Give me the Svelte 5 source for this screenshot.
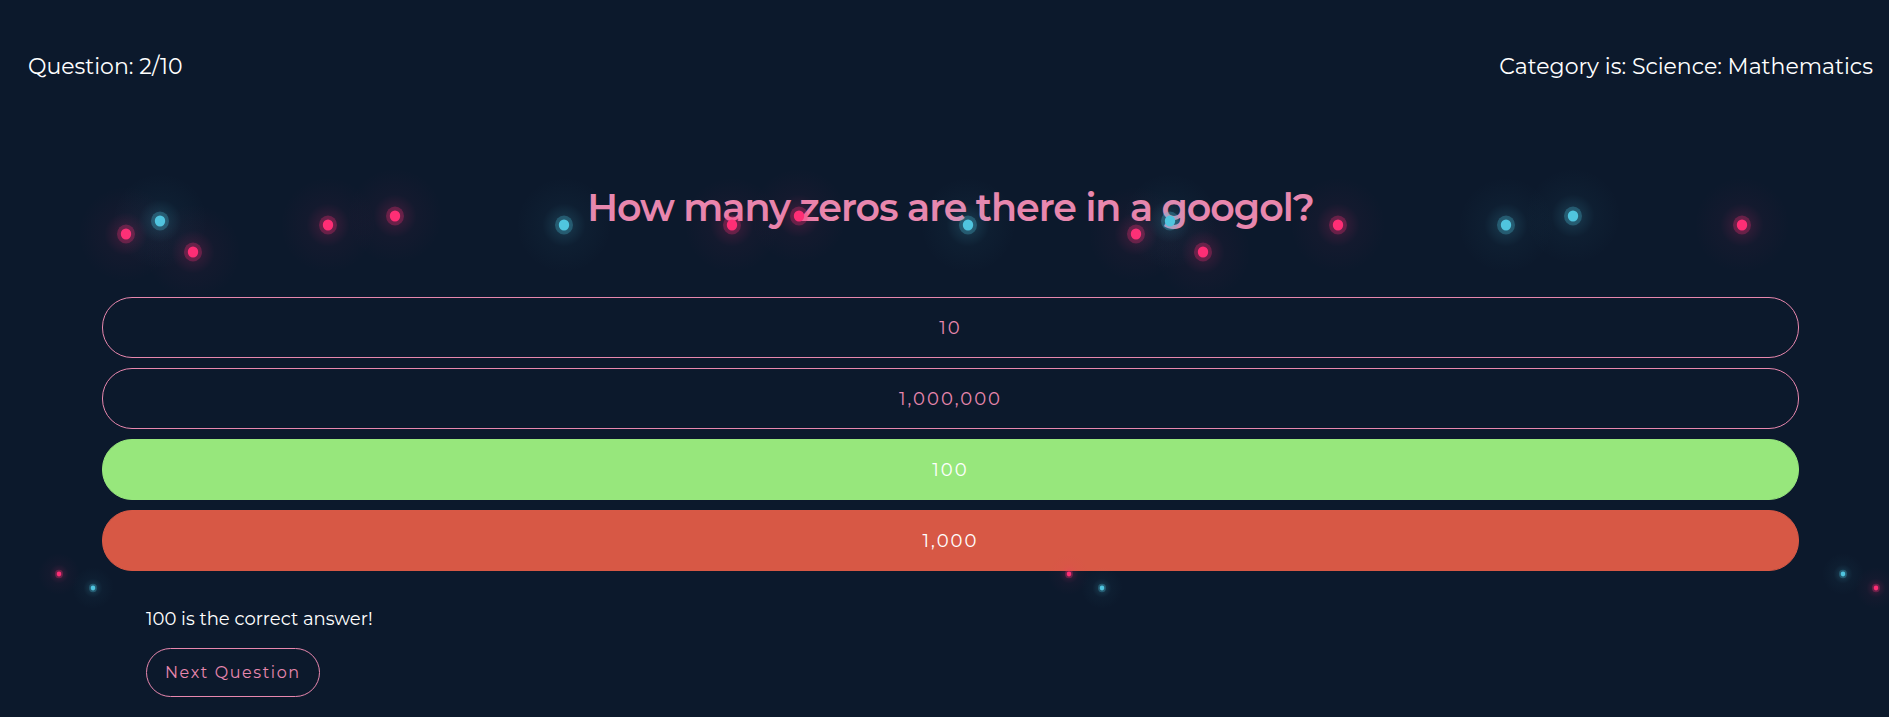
<script>
  const answers = [
    { text: '10', state: '' },
    { text: '1,000,000', state: '' },
    { text: '100', state: 'correct' },
    { text: '1,000', state: 'wrong' }
  ];

  // Confetti sparks: x, y, colour, size factor
  const sparks = [
    [126, 234, 'pink', 1], [160, 221, 'cyan', 1], [193, 252, 'pink', 1],
    [328, 225, 'pink', 1], [395, 216, 'pink', 1], [564, 225, 'cyan', 1],
    [732, 225, 'pink', 1], [799, 216, 'pink', 1], [968, 225, 'cyan', 1],
    [1136, 234, 'pink', 1], [1170, 221, 'cyan', 1], [1203, 252, 'pink', 1],
    [1338, 225, 'pink', 1], [1506, 225, 'cyan', 1], [1573, 216, 'cyan', 1],
    [1742, 225, 'pink', 1],
    [59, 574, 'pink', 0.44], [93, 588, 'cyan', 0.44], [1069, 574, 'pink', 0.44],
    [1102, 588, 'cyan', 0.44], [1843, 574, 'cyan', 0.44], [1876, 588, 'pink', 0.44]
  ];
  const colours = { pink: '#ff2e75', cyan: '#50c5df' };
</script>

<main>
  <header>
    <p>Question: 2/10</p>
    <p>Category is: Science: Mathematics</p>
  </header>

  <h1>How many zeros are there in a googol?</h1>

  <div class="answers">
    {#each answers as answer}
      <button class="answer {answer.state}">{answer.text}</button>
    {/each}
  </div>

  <footer>
    <p>100 is the correct answer!</p>
    <button class="next">Next Question</button>
  </footer>

  <svg class="sparks" aria-hidden="true">
    <defs>
      {#each Object.entries(colours) as [name, colour]}
        <radialGradient id="glow-{name}">
          <stop offset="0" stop-color={colour} stop-opacity="0.22" />
          <stop offset="0.2" stop-color={colour} stop-opacity="0.13" />
          <stop offset="0.45" stop-color={colour} stop-opacity="0.03" />
          <stop offset="1" stop-color={colour} stop-opacity="0" />
        </radialGradient>
      {/each}
    </defs>
    {#each sparks as [x, y, colour, size]}
      <circle cx={x} cy={y} r={48 * size} fill="url(#glow-{colour})" />
      <ellipse cx={x} cy={y} rx={9 * size} ry={9.5 * size} fill={colours[colour]} fill-opacity="0.28" />
      <ellipse cx={x} cy={y} rx={5.2 * size} ry={5.6 * size} fill={colours[colour]} />
    {/each}
  </svg>
</main>

<style>
  :global(body) {
    margin: 0;
    background: #0c192c;
  }

  main {
    position: relative;
    box-sizing: border-box;
    min-height: 100vh;
    overflow: hidden;
    padding: 53px 16px 20px 28px;
    color: #fff;
    font-family: Montserrat, Inter, sans-serif;
  }

  p,
  h1 {
    margin: 0;
  }

  header {
    display: flex;
    justify-content: space-between;
    font-size: 22px;
    line-height: 28px;
  }

  h1 {
    margin-top: 100px;
    color: #e887ae;
    font-size: 38px;
    font-weight: 600;
    letter-spacing: -1px;
    line-height: 54px;
    text-align: center;
  }

  .answers {
    display: flex;
    flex-direction: column;
    gap: 10px;
    margin: 62px 74px 0;
  }

  button {
    border: 1px solid #e887ae;
    background: transparent;
    color: #e887ae;
    font-family: inherit;
    cursor: pointer;
  }

  .answer {
    height: 61px;
    border-radius: 30px;
    font-size: 18px;
    letter-spacing: 2px;
  }

  .correct {
    border-color: #97e77c;
    background: #97e77c;
    color: #fff;
  }

  .wrong {
    border-color: #d75845;
    background: #d75845;
    color: #fff;
  }

  footer {
    display: flex;
    flex-direction: column;
    align-items: flex-start;
    gap: 17px;
    margin: 36px 118px 0;
    font-size: 18px;
    line-height: 24px;
  }

  .next {
    height: 49px;
    padding: 0 18px;
    border-radius: 25px;
    font-size: 16px;
    letter-spacing: 0.1em;
  }

  .sparks {
    position: absolute;
    inset: 0;
    width: 100%;
    height: 100%;
    pointer-events: none;
  }
</style>
